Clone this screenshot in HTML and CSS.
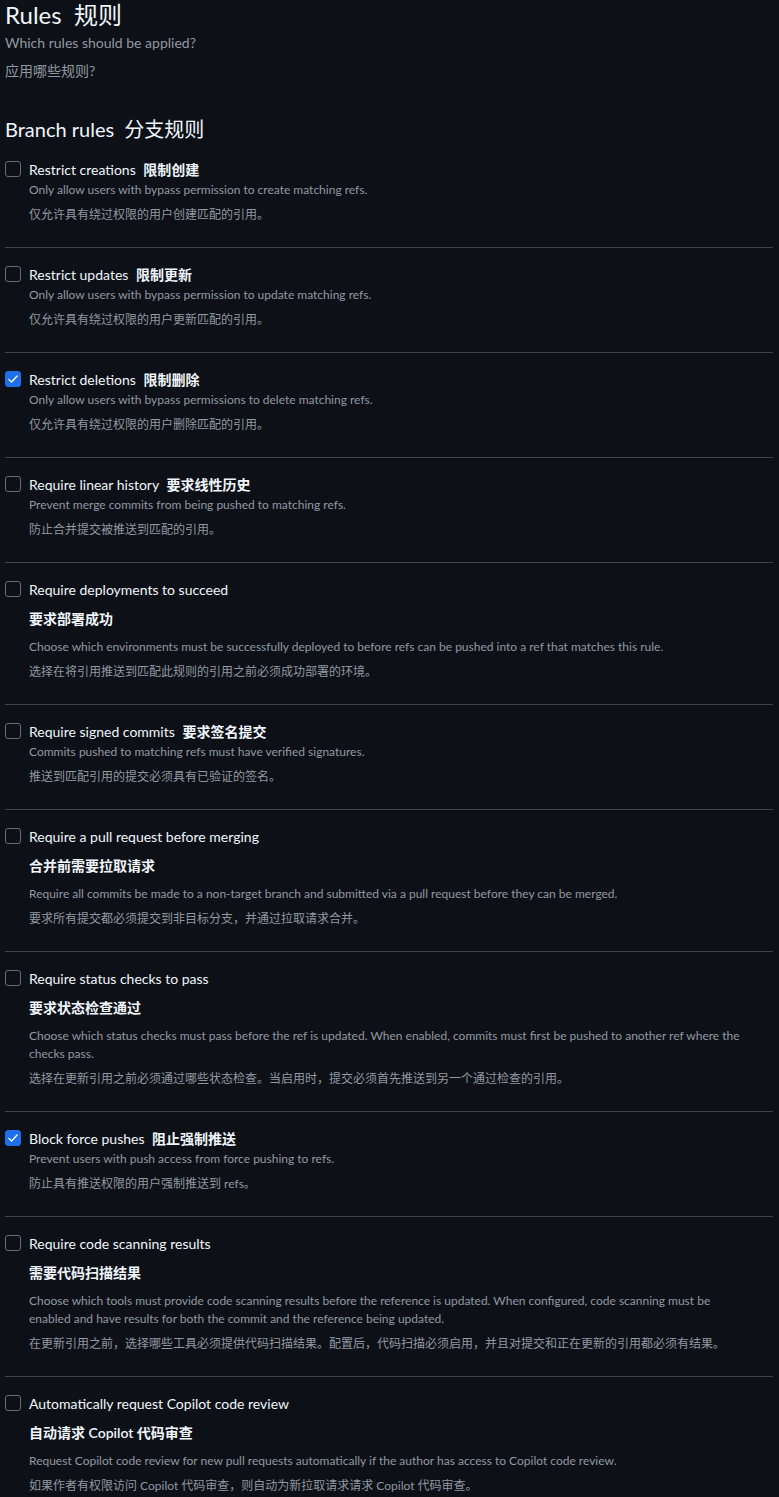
FILE: index.html
```html
<!DOCTYPE html>
<html lang="zh-CN">
<head>
    <meta charset="UTF-8">
    <meta name="viewport" content="width=device-width, initial-scale=1.0">
    <title>Rules 规则</title>
    <link rel="stylesheet" href="styles.css">
</head>
<body>
    <div class="page">
        <h1 class="page-title">Rules&nbsp; 规则</h1>
        <p class="lead">Which rules should be applied?</p>
        <p class="lead lead-zh">应用哪些规则?</p>

        <h2 class="section-title">Branch rules&nbsp; 分支规则</h2>

        <ul class="rules">
            <li class="rule">
                <span class="check"></span>
                <div class="rule-body">
                    <div class="rule-title">Restrict creations <span class="zh">限制创建</span></div>
                    <p class="rule-desc">Only allow users with bypass permission to create matching refs.</p>
                    <p class="rule-desc zh-desc">仅允许具有绕过权限的用户创建匹配的引用。</p>
                </div>
            </li>

            <li class="rule">
                <span class="check"></span>
                <div class="rule-body">
                    <div class="rule-title">Restrict updates <span class="zh">限制更新</span></div>
                    <p class="rule-desc">Only allow users with bypass permission to update matching refs.</p>
                    <p class="rule-desc zh-desc">仅允许具有绕过权限的用户更新匹配的引用。</p>
                </div>
            </li>

            <li class="rule">
                <span class="check checked">
                    <svg viewBox="0 0 16 16" width="12" height="12"><path d="M2.5 8.5l3.5 3.5 7.5-8" fill="none" stroke="#fff" stroke-width="1.8" stroke-linecap="round" stroke-linejoin="round"/></svg>
                </span>
                <div class="rule-body">
                    <div class="rule-title">Restrict deletions <span class="zh">限制删除</span></div>
                    <p class="rule-desc">Only allow users with bypass permissions to delete matching refs.</p>
                    <p class="rule-desc zh-desc">仅允许具有绕过权限的用户删除匹配的引用。</p>
                </div>
            </li>

            <li class="rule">
                <span class="check"></span>
                <div class="rule-body">
                    <div class="rule-title">Require linear history <span class="zh">要求线性历史</span></div>
                    <p class="rule-desc">Prevent merge commits from being pushed to matching refs.</p>
                    <p class="rule-desc zh-desc">防止合并提交被推送到匹配的引用。</p>
                </div>
            </li>

            <li class="rule">
                <span class="check"></span>
                <div class="rule-body">
                    <div class="rule-title">Require deployments to succeed</div>
                    <div class="rule-title-zh">要求部署成功</div>
                    <p class="rule-desc">Choose which environments must be successfully deployed to before refs can be pushed into a ref that matches this rule.</p>
                    <p class="rule-desc zh-desc">选择在将引用推送到匹配此规则的引用之前必须成功部署的环境。</p>
                </div>
            </li>

            <li class="rule">
                <span class="check"></span>
                <div class="rule-body">
                    <div class="rule-title">Require signed commits <span class="zh">要求签名提交</span></div>
                    <p class="rule-desc">Commits pushed to matching refs must have verified signatures.</p>
                    <p class="rule-desc zh-desc">推送到匹配引用的提交必须具有已验证的签名。</p>
                </div>
            </li>

            <li class="rule">
                <span class="check"></span>
                <div class="rule-body">
                    <div class="rule-title">Require a pull request before merging</div>
                    <div class="rule-title-zh">合并前需要拉取请求</div>
                    <p class="rule-desc">Require all commits be made to a non-target branch and submitted via a pull request before they can be merged.</p>
                    <p class="rule-desc zh-desc">要求所有提交都必须提交到非目标分支，并通过拉取请求合并。</p>
                </div>
            </li>

            <li class="rule">
                <span class="check"></span>
                <div class="rule-body">
                    <div class="rule-title">Require status checks to pass</div>
                    <div class="rule-title-zh">要求状态检查通过</div>
                    <p class="rule-desc">Choose which status checks must pass before the ref is updated. When enabled, commits must first be pushed to another ref where the checks pass.</p>
                    <p class="rule-desc zh-desc">选择在更新引用之前必须通过哪些状态检查。当启用时，提交必须首先推送到另一个通过检查的引用。</p>
                </div>
            </li>

            <li class="rule">
                <span class="check checked">
                    <svg viewBox="0 0 16 16" width="12" height="12"><path d="M2.5 8.5l3.5 3.5 7.5-8" fill="none" stroke="#fff" stroke-width="1.8" stroke-linecap="round" stroke-linejoin="round"/></svg>
                </span>
                <div class="rule-body">
                    <div class="rule-title">Block force pushes <span class="zh">阻止强制推送</span></div>
                    <p class="rule-desc">Prevent users with push access from force pushing to refs.</p>
                    <p class="rule-desc zh-desc">防止具有推送权限的用户强制推送到 refs。</p>
                </div>
            </li>

            <li class="rule">
                <span class="check"></span>
                <div class="rule-body">
                    <div class="rule-title">Require code scanning results</div>
                    <div class="rule-title-zh">需要代码扫描结果</div>
                    <p class="rule-desc">Choose which tools must provide code scanning results before the reference is updated. When configured, code scanning must be enabled and have results for both the commit and the reference being updated.</p>
                    <p class="rule-desc zh-desc">在更新引用之前，选择哪些工具必须提供代码扫描结果。配置后，代码扫描必须启用，并且对提交和正在更新的引用都必须有结果。</p>
                </div>
            </li>

            <li class="rule">
                <span class="check"></span>
                <div class="rule-body">
                    <div class="rule-title">Automatically request Copilot code review</div>
                    <div class="rule-title-zh">自动请求 Copilot 代码审查</div>
                    <p class="rule-desc">Request Copilot code review for new pull requests automatically if the author has access to Copilot code review.</p>
                    <p class="rule-desc zh-desc">如果作者有权限访问 Copilot 代码审查，则自动为新拉取请求请求 Copilot 代码审查。</p>
                </div>
            </li>
        </ul>
    </div>
</body>
</html>
```

FILE: styles.css
```css
body {
    margin: 0;
    background-color: #0d1117;
    color: #f0f6fc;
    font-family: Lato, "Noto Sans CJK SC", sans-serif;
}

.page {
    padding: 0 6px 0 5px;
}

.page-title {
    margin: 0;
    font-size: 24px;
    font-weight: 400;
    line-height: 30px;
}

.lead {
    margin: 3px 0 0;
    font-size: 14px;
    line-height: 20px;
    color: #9198a1;
}

.lead-zh {
    margin-top: 8px;
}

.section-title {
    margin: 34px 0 0;
    font-size: 20px;
    font-weight: 400;
    line-height: 28px;
}

.rules {
    list-style: none;
    margin: 0;
    padding: 0;
}

.rule {
    display: flex;
    gap: 8px;
    padding: 17px 0 23px;
    border-bottom: 1px solid #3d444d;
}

.rule:last-child {
    border-bottom: none;
}

.check {
    flex: none;
    box-sizing: border-box;
    width: 16px;
    height: 16px;
    margin-top: 1px;
    border: 1px solid #656c76;
    border-radius: 3px;
    display: flex;
    align-items: center;
    justify-content: center;
}

.check.checked {
    background-color: #1f6feb;
    border-color: #1f6feb;
}

.rule-body {
    flex: 1;
    min-width: 0;
    padding-right: 20px;
}

.rule-title {
    font-size: 14px;
    line-height: 20px;
}

.rule-title .zh {
    margin-left: 4px;
    font-weight: 600;
}

.rule-title-zh {
    margin-top: 9px;
    font-size: 14px;
    line-height: 20px;
    font-weight: 600;
}

.rule-desc {
    margin: 1px 0 0;
    font-size: 12px;
    line-height: 18px;
    color: #9198a1;
}

.rule-title-zh + .rule-desc {
    margin-top: 9px;
}

.zh-desc {
    margin-top: 7px;
}
```
